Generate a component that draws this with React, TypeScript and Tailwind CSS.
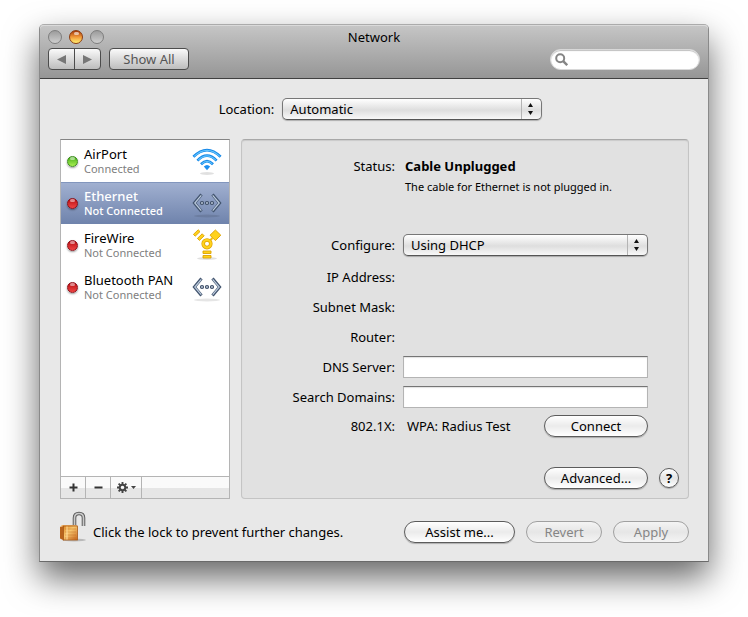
import React from "react";

type IconName = "wifi" | "ethernet" | "firewire";

interface Service {
  name: string;
  status: string;
  connected: boolean;
  selected?: boolean;
  icon: IconName;
}

const services: Service[] = [
  { name: "AirPort", status: "Connected", connected: true, icon: "wifi" },
  { name: "Ethernet", status: "Not Connected", connected: false, selected: true, icon: "ethernet" },
  { name: "FireWire", status: "Not Connected", connected: false, icon: "firewire" },
  { name: "Bluetooth PAN", status: "Not Connected", connected: false, icon: "ethernet" },
];

function WifiIcon() {
  return (
    <svg width="32" height="32" viewBox="0 0 32 32" fill="none" aria-hidden="true">
      <ellipse cx="16" cy="28.500" rx="7" ry="1.5" fill="#000" opacity="0.12" />
      <g stroke="#1487e8" strokeWidth="2.7">
        <path d="M2.4 11.8 Q16 -1.6 29.6 11.8" />
        <path d="M6.4 15.6 Q16 5.8 25.6 15.6" />
        <path d="M10 19.2 Q16 13 22 19.2" />
      </g>
      <g stroke="#62c4fc" strokeWidth="1.1">
        <path d="M3.2 11.4 Q16 -0.8 28.8 11.4" />
        <path d="M7.2 15.2 Q16 6.4 24.8 15.2" />
        <path d="M10.8 18.9 Q16 13.7 21.2 18.9" />
      </g>
      <path d="M12.8 21.6 Q16 18.6 19.2 21.6 L16 25.2 Z" fill="#1c8ff0" />
    </svg>
  );
}

function EthernetIcon() {
  return (
    <svg width="32" height="32" viewBox="0 0 32 32" fill="none" aria-hidden="true">
      <ellipse cx="16" cy="29" rx="13" ry="1.5" fill="#000" opacity="0.1" />
      <g stroke="#42546e" strokeWidth="3">
        <path d="M10.5 7.5 L3.4 16 L10.5 24.5" />
        <path d="M21.5 7.5 L28.6 16 L21.5 24.5" />
      </g>
      <g stroke="#bccbdd" strokeWidth="1.2">
        <path d="M10.3 8.3 L3.8 16 L10.3 23.7" />
        <path d="M21.7 8.3 L28.2 16 L21.7 23.7" />
      </g>
      <g stroke="#3d4d66" strokeWidth="1.2" fill="#c5d2e2">
        <circle cx="11" cy="16" r="1.5" />
        <circle cx="16" cy="16" r="1.5" />
        <circle cx="21" cy="16" r="1.5" />
      </g>
    </svg>
  );
}

function FirewireIcon() {
  return (
    <svg width="32" height="32" viewBox="0 0 32 32" aria-hidden="true">
      <ellipse cx="16" cy="29.5" rx="10" ry="1.5" fill="#000" opacity="0.12" />
      <g fill="#ffd21c" stroke="#dda100" strokeWidth="0.9">
        <path d="M2.4 5.4 L7.2 0.8 L9 2.6 L4.2 7.2 Z" />
        <path d="M6.400 9.400 L11.200 4.800 L13.200 6.800 L8.400 11.400 Z" />
        <path d="M24.400 1 L29.800 6.200 L24.400 11.600 L19 6.200 Z" />
        <path d="M12 22 H20 V24.500 H12 Z" />
        <path d="M12 26.500 H20 V29 H12 Z" />
      </g>
      <path d="M19.500 11 L21.500 9" stroke="#f2bd0c" strokeWidth="2" />
      <circle cx="16" cy="14.800" r="3.800" fill="#fff" stroke="#dda100" strokeWidth="3.600" />
      <circle cx="16" cy="14.800" r="3.800" fill="none" stroke="#ffd21c" strokeWidth="2.200" />
    </svg>
  );
}

const icons: Record<IconName, () => React.ReactElement> = {
  wifi: WifiIcon,
  ethernet: EthernetIcon,
  firewire: FirewireIcon,
};

function StatusDot({ connected }: { connected: boolean }) {
  const tone = connected
    ? "from-[#3fae14] to-[#a8f050] border-[#3b8a1c]"
    : "from-[#b8000c] to-[#f04444] border-[#8c1018]";
  return (
    <span className={`flex h-[11px] w-[11px] shrink-0 justify-center rounded-full border bg-linear-to-b shadow-[0_1px_2px_rgba(0,0,0,0.4)] ${tone}`}>
      <span className="h-[3px] w-[5px] rounded-full bg-white/50" />
    </span>
  );
}

function LockIcon() {
  return (
    <svg width="28" height="32" viewBox="0 0 28 32" aria-hidden="true">
      <defs>
        <linearGradient id="lock-front" x1="0" y1="0" x2="1" y2="1">
          <stop offset="0" stopColor="#e08a28" />
          <stop offset="0.4" stopColor="#f8c870" />
          <stop offset="1" stopColor="#c8661c" />
        </linearGradient>
      </defs>
      <ellipse cx="15" cy="29" rx="12" ry="1.5" fill="#000" opacity="0.2" />
      <path d="M15.500 15 V7 Q15.500 2.500 20 2.500 Q24.500 2.500 24.500 7 V15" fill="none" stroke="#5e5e5e" strokeWidth="3.600" />
      <path d="M15.500 15 V7 Q15.500 2.500 20 2.500 Q24.500 2.500 24.500 7 V15" fill="none" stroke="#c9c9c9" strokeWidth="1.600" />
      <path d="M1 16 L5 14.5 V29.5 L1 27.5 Z" fill="#b8641c" />
      <path d="M1 16 L3 14 H17 L18 15 H5 Z" fill="#f0b468" />
      <rect x="4.500" y="15" width="14" height="14" fill="url(#lock-front)" stroke="#a85a18" strokeWidth="0.8" />
      <path d="M6 18 H17 M6 21 H17 M6 24 H17 M6 27 H17" stroke="#b8601a" strokeWidth="0.7" opacity="0.5" />
      <path d="M8 15.500 V28.500" stroke="#ffe0a0" strokeWidth="1" />
    </svg>
  );
}

interface PopupProps {
  id: string;
  value: string;
  className?: string;
}

function Popup({ id, value, className = "" }: PopupProps) {
  return (
    <div className={`relative ${className}`}>
      <select
        id={id}
        defaultValue={value}
        className="block h-[22px] w-full appearance-none rounded-[5px] border border-[#777] border-b-[#555] bg-linear-to-b from-white via-[#dedede] via-55% to-[#f8f8f8] pr-6 pl-[7px] text-[13px] leading-[18px] shadow-[0_1px_1px_rgba(0,0,0,0.25)]"
      >
        <option>{value}</option>
      </select>
      <svg className="pointer-events-none absolute top-[1px] right-[1px]" width="20" height="20" viewBox="0 0 20 20" aria-hidden="true">
        <path d="M0.500 0 V20" stroke="#b4b4b4" />
        <path d="M7 8 L9.500 4 L12 8 Z M7 12 L9.500 16 L12 12 Z" fill="#111" />
      </svg>
    </div>
  );
}

interface PushButtonProps {
  children: React.ReactNode;
  className: string;
  disabled?: boolean;
}

function PushButton({ children, className, disabled }: PushButtonProps) {
  const tone = disabled
    ? "border-[#a0a0a0] text-[#858585] from-[#f4f4f4] via-[#e6e6e6] to-[#f4f4f4]"
    : "border-[#5c5c5c] text-black from-white via-[#ebebeb] to-white shadow-[0_1px_1px_rgba(0,0,0,0.25)]";
  return (
    <button
      type="button"
      disabled={disabled}
      className={`flex h-[22px] items-center justify-center rounded-full border bg-linear-to-b text-[13px] leading-[18px] ${tone} ${className}`}
    >
      {children}
    </button>
  );
}

function Label({ children, htmlFor }: { children: string; htmlFor?: string }) {
  if (htmlFor) {
    return <label htmlFor={htmlFor} className="text-right">{children}</label>;
  }
  return <span className="text-right">{children}</span>;
}

const row = "grid grid-cols-[153px_1fr] items-center gap-x-2";
const field =
  "block h-[22px] w-full border border-[#b4b4b4] border-t-[#757575] bg-white px-1 text-[13px] outline-none shadow-[inset_0_1px_1px_rgba(0,0,0,0.12)]";

function TitleBar() {
  const light = "h-[14px] w-[14px] rounded-full border";
  return (
    <header className="rounded-t-[4px] border-b border-[#404040] bg-linear-to-b from-[#c6c6c6] to-[#969696] px-2 pb-2 shadow-[inset_0_1px_0_#dadada]">
      <div className="grid h-[23px] grid-cols-[1fr_auto_1fr] items-center">
        <div className="flex gap-[7px]">
          <button type="button" aria-label="Close" className={`${light} border-[#7e7e7e] bg-linear-to-b from-[#9c9c9c] to-[#cfcfcf]`} />
          <button type="button" aria-label="Minimize" className={`${light} flex justify-center border-[#8c3c10] bg-linear-to-b from-[#a83808] via-[#f09838] to-[#fff070]`}>
            <span className="mt-[1px] h-[3px] w-[5px] rounded-full bg-white/60" />
          </button>
          <button type="button" aria-label="Zoom" className={`${light} border-[#7e7e7e] bg-linear-to-b from-[#9c9c9c] to-[#cfcfcf]`} />
        </div>
        <h1 className="text-[13px] leading-[18px]">Network</h1>
      </div>
      <div className="flex h-[22px] items-center">
        <div className="flex h-[22px] w-[53px] divide-x divide-[#4c4c4c] overflow-hidden rounded-[4px] border border-[#4c4c4c] bg-linear-to-b from-[#fafafa] to-[#bdbdbd]">
          <button type="button" aria-label="Back" className="flex flex-1 items-center justify-center">
            <svg width="9" height="9" viewBox="0 0 9 9"><path d="M0 4.500 L9 0 V9 Z" fill="#777" /></svg>
          </button>
          <button type="button" aria-label="Forward" className="flex flex-1 items-center justify-center">
            <svg width="9" height="9" viewBox="0 0 9 9"><path d="M9 4.500 L0 0 V9 Z" fill="#777" /></svg>
          </button>
        </div>
        <button type="button" className="ml-2 h-[22px] w-20 rounded-[4px] border border-[#4c4c4c] bg-linear-to-b from-[#fafafa] to-[#bdbdbd] text-[13px] leading-[18px] text-[#555]">
          Show All
        </button>
        <label className="ml-auto flex h-[21px] w-[150px] items-center rounded-full border border-[#d8d8d8] bg-white pl-1 shadow-[inset_0_1px_1px_rgba(0,0,0,0.25)]">
          <svg width="13" height="13" viewBox="0 0 13 13" fill="none" stroke="#858585" strokeWidth="2" aria-hidden="true" className="shrink-0">
            <circle cx="5.200" cy="5.200" r="4" />
            <path d="M8.200 8.200 L12.200 12.200" strokeWidth="2.400" />
          </svg>
          <input type="search" aria-label="Search" className="w-full min-w-0 bg-transparent px-1 text-[13px] outline-none" />
        </label>
      </div>
    </header>
  );
}

function Sidebar() {
  const tool = "flex h-[21px] items-center justify-center border-r border-[#b4b4b4]";
  return (
    <nav aria-label="Services" className="flex w-[170px] shrink-0 flex-col border border-[#b4b4b4] border-t-[#848484] bg-white">
      <ul className="flex-1">
        {services.map(({ name, status, connected, selected, icon }) => {
          const Icon = icons[icon];
          return (
            <li key={name}>
              <button
                type="button"
                className={`flex h-[42px] w-full items-center px-[6px] text-left ${
                  selected
                    ? "bg-linear-to-b from-[#a2b1d1] to-[#6f83ac] text-white shadow-[inset_0_1px_0_#8296bd]"
                    : "text-black"
                }`}
              >
                <StatusDot connected={connected} />
                <span className="ml-[6px] flex-1">
                  <span className={`block text-[13px] leading-4 whitespace-nowrap ${selected ? "font-medium" : ""}`}>{name}</span>
                  <span className={`block text-[11px] leading-[14px] whitespace-nowrap ${selected ? "font-medium" : "text-[#808080]"}`}>{status}</span>
                </span>
                <span className="-ml-4">
                  <Icon />
                </span>
              </button>
            </li>
          );
        })}
      </ul>
      <div className="flex border-t border-[#b4b4b4] bg-linear-to-b from-[#fafafa] from-50% to-[#e6e6e6] to-50%">
        <button type="button" aria-label="Add service" className={`${tool} w-[25px]`}>
          <svg width="9" height="9" viewBox="0 0 9 9" stroke="#333" strokeWidth="2"><path d="M0.500 4.500 H8.500 M4.500 0.500 V8.500" /></svg>
        </button>
        <button type="button" aria-label="Remove service" className={`${tool} w-[25px]`}>
          <svg width="9" height="9" viewBox="0 0 9 9" stroke="#333" strokeWidth="2"><path d="M0.500 4.500 H8.500" /></svg>
        </button>
        <button type="button" aria-label="Service actions" className={`${tool} w-[31px] gap-[3px]`}>
          <svg width="11" height="11" viewBox="0 0 11 11" fill="none" stroke="#444" aria-hidden="true">
            <circle cx="5.500" cy="5.500" r="2.800" strokeWidth="2" />
            <path d="M5.500 0 V2.200 M5.500 8.800 V11 M0 5.500 H2.200 M8.800 5.500 H11 M1.600 1.600 L3.200 3.200 M7.800 7.800 L9.400 9.400 M9.400 1.600 L7.800 3.200 M3.200 7.800 L1.600 9.400" strokeWidth="1.900" />
          </svg>
          <svg width="5" height="3" viewBox="0 0 5 3" aria-hidden="true"><path d="M0 0 H5 L2.500 3 Z" fill="#444" /></svg>
        </button>
      </div>
    </nav>
  );
}

function Details() {
  return (
    <section className="min-w-0 flex-1 rounded-[4px] border border-[#c4c4c4] border-t-[#a8a8a8] bg-[#e1e1e1] pt-[15px] pr-2 pb-[9px] shadow-[inset_0_1px_1px_rgba(0,0,0,0.1)]">
      <div className="pr-8">
        <div className={`${row} h-[22px]`}>
          <Label>Status:</Label>
          <strong className="pl-[2px] font-bold">Cable Unplugged</strong>
        </div>
        <div className={`${row} h-5`}>
          <span className="col-start-2 pl-[2px] text-[11px] leading-[14px]">The cable for Ethernet is not plugged in.</span>
        </div>
        <div className={`${row} mt-9 h-6`}>
          <Label htmlFor="configure">Configure:</Label>
          <Popup id="configure" value="Using DHCP" />
        </div>
        <div className="pt-[5px]">
          <div className={`${row} h-[30px]`}><Label>IP Address:</Label></div>
          <div className={`${row} h-[30px]`}><Label>Subnet Mask:</Label></div>
          <div className={`${row} h-[30px]`}><Label>Router:</Label></div>
          <div className={`${row} h-[30px]`}>
            <Label htmlFor="dns">DNS Server:</Label>
            <input id="dns" type="text" className={field} />
          </div>
          <div className={`${row} h-[30px]`}>
            <Label htmlFor="domains">Search Domains:</Label>
            <input id="domains" type="text" className={field} />
          </div>
        </div>
        <div className={`${row} h-7`}>
          <Label>802.1X:</Label>
          <div className="flex items-center justify-between pl-1">
            <span>WPA: Radius Test</span>
            <PushButton className="w-[104px]">Connect</PushButton>
          </div>
        </div>
      </div>
      <div className="mt-[27px] flex items-center justify-end gap-[11px] pr-[1px]">
        <PushButton className="w-[104px]">Advanced...</PushButton>
        <button
          type="button"
          aria-label="Help"
          className="flex h-5 w-5 items-center justify-center rounded-full border border-[#5c5c5c] bg-linear-to-b from-white via-[#e4e4e4] to-white text-[13px] leading-[18px] font-bold shadow-[0_1px_1px_rgba(0,0,0,0.25)]"
        >
          ?
        </button>
      </div>
    </section>
  );
}

export default function App() {
  return (
    <div className="bg-white px-[39px] pt-6 pb-[54px] font-['Noto_Sans','Lucida_Grande',sans-serif] text-[13px] leading-[18px] text-black">
      <main className="rounded-t-[5px] border border-[#8a8a8a] border-t-[#ababab] border-b-[#6a6a6a] bg-[#e8e8e8] shadow-[0_16px_34px_rgba(0,0,0,0.6)]">
        <TitleBar />
        <div className="pr-[19px] pb-[18px] pl-5">
          <div className="flex items-center justify-center pt-[19px] pl-3">
            <label htmlFor="location" className="mr-2">Location:</label>
            <Popup id="location" value="Automatic" className="w-[260px]" />
          </div>
          <div className="mt-[19px] flex gap-[11px]">
            <Sidebar />
            <Details />
          </div>
          <footer className="mt-3 flex items-end">
            <button type="button" aria-label="Lock" className="-ml-[1px]"><LockIcon /></button>
            <span className="ml-[6px] pb-[2px] whitespace-nowrap">Click the lock to prevent further changes.</span>
            <div className="ml-auto flex gap-[11px]">
              <PushButton className="w-[111px]">Assist me...</PushButton>
              <PushButton className="w-[76px]" disabled>Revert</PushButton>
              <PushButton className="w-[76px]" disabled>Apply</PushButton>
            </div>
          </footer>
        </div>
      </main>
    </div>
  );
}
